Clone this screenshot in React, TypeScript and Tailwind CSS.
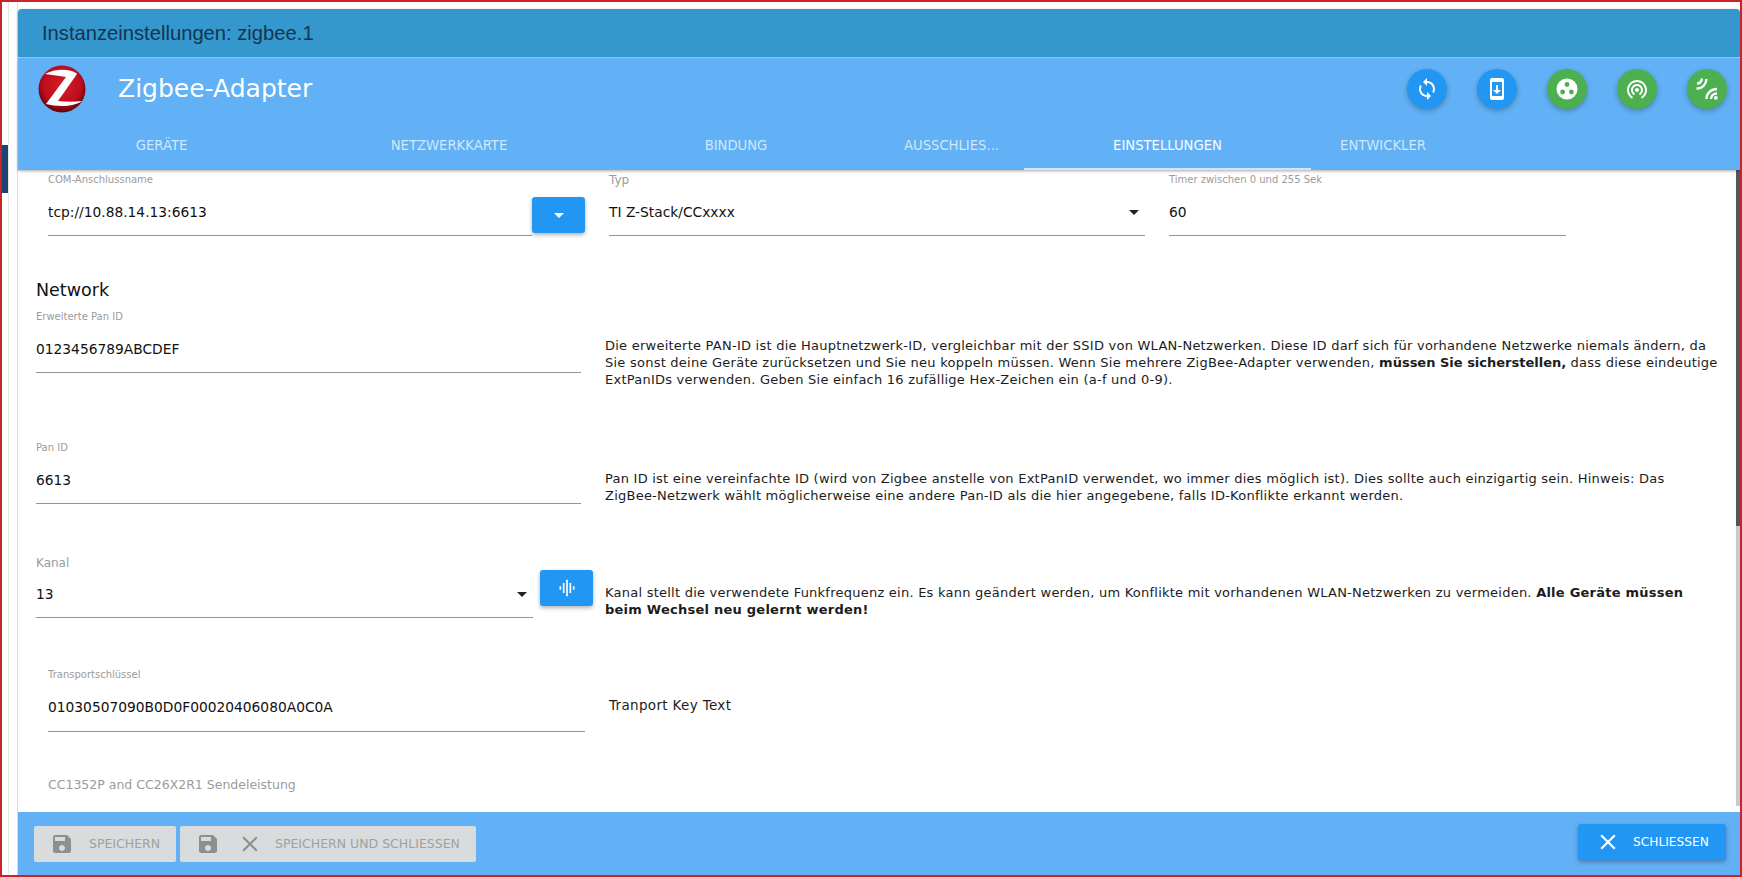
import React from "react";
import { MdSync, MdSystemUpdate, MdWifiTethering, MdArrowDropDown, MdGraphicEq, MdSave, MdClose } from "react-icons/md";

const tabs: [string, string, boolean][] = [
  ["GERÄTE", "w-[287px]", false],
  ["NETZWERKKARTE", "w-[288px]", false],
  ["BINDUNG", "w-[286px]", false],
  ["AUSSCHLIES...", "w-[145px]", false],
  ["EINSTELLUNGEN", "w-[287px]", true],
  ["ENTWICKLER", "w-[144px]", false],
];

function ZigbeeLogo() {
  return (
    <svg width="48" height="48" viewBox="0 0 48 48">
      <defs>
        <radialGradient id="zred" cx="50%" cy="42%" r="58%">
          <stop offset="0%" stopColor="#d81c28" />
          <stop offset="70%" stopColor="#bd0d1c" />
          <stop offset="100%" stopColor="#5c0508" />
        </radialGradient>
      </defs>
      <circle cx="24" cy="24" r="23.5" fill="url(#zred)" />
      <path d="M7 9 C16 4 30 3 38 8 L39 9 L20 36 C28 37 36 37 44 36 C36 42 20 42 8 39 L28 12 C22 11 14 10 7 9 Z" fill="#fff" />
    </svg>
  );
}

function DotsIcon() {
  return (
    <svg width="24" height="24" viewBox="0 0 24 24">
      <circle cx="12" cy="12" r="10.5" fill="#fff" />
      <circle cx="12" cy="7.5" r="2.4" fill="#4caf50" />
      <circle cx="7.6" cy="15" r="2.4" fill="#4caf50" />
      <circle cx="16.4" cy="15" r="2.4" fill="#4caf50" />
    </svg>
  );
}

function SignalIcon() {
  return (
    <svg width="24" height="24" viewBox="0 0 24 24" fill="none" stroke="#fff" strokeWidth="2.4">
      <path d="M2 6.5 C4.5 6.5 6.5 5 7 1.5" />
      <path d="M1.5 11.5 C7 12 11 8 11.5 2" />
      <path d="M11.5 22 C11.5 16.5 16 12 22 12" />
      <path d="M16 22 C16 19 18.5 16.5 22 16.5" />
      <circle cx="20.8" cy="20.8" r="1.9" fill="#fff" stroke="none" />
    </svg>
  );
}

function RoundButton({ green, children }: { green?: boolean; children: React.ReactNode }) {
  return (
    <div className={`flex h-10 w-10 items-center justify-center rounded-full text-white shadow-[0_2px_5px_rgba(0,0,0,0.25)] ${green ? "bg-[#4caf50]" : "bg-[#2196f3]"}`}>
      {children}
    </div>
  );
}

function Label({ children, h = "h-[14px]", size = "text-[10px]" }: { children: React.ReactNode; h?: string; size?: string }) {
  return <div className={`${h} ${size} flex items-center whitespace-nowrap leading-none text-[#9b9b9b]`}>{children}</div>;
}

function Input({ value, h = "h-[49px]", arrow = false, pad = "pt-[2px]" }: { value: string; h?: string; arrow?: boolean; pad?: string }) {
  return (
    <div className={`${h} ${pad} flex items-center justify-between border-b border-[#949494] text-[13.8px] text-[#111]`}>
      <span>{value}</span>
      {arrow && <MdArrowDropDown className="mr-[-1px] text-[#222]" size={24} />}
    </div>
  );
}

function BlueSquare({ children }: { children: React.ReactNode }) {
  return (
    <div className="flex h-[36px] w-[53px] items-center justify-center rounded-[3px] bg-[#2196f3] text-white shadow-[0_2px_4px_rgba(0,0,0,0.3)]">
      {children}
    </div>
  );
}

function Description({ children, mt, ml = "ml-[24px]", w = "w-[1112px]" }: { children: React.ReactNode; mt: string; ml?: string; w?: string }) {
  return <div className={`${mt} ${ml} ${w} text-[13px] leading-[17px] tracking-[0.24px] text-[#1c1c1c]`}>{children}</div>;
}

export default function App() {
  return (
    <div className="flex h-[877px] w-[1742px] overflow-hidden border-2 border-[#c8242c] bg-white font-['DejaVu_Sans',sans-serif]">
      <div className="flex w-[16px] shrink-0 border-r border-[#dcdcdc]">
        <div className="h-full w-[7px] border-r border-[#e6e6e6] pt-[143px]">
          <div className="h-[48px] w-full bg-[#1d4372]" />
        </div>
      </div>
      <div className="flex min-w-0 flex-1 flex-col pt-[7px]">
        <div className="flex h-[48px] shrink-0 items-center rounded-t-[4px] bg-[#3497ce] pl-[24px] font-['Liberation_Sans',sans-serif] text-[20.2px] text-[#14354f] shadow-[0_1px_3px_rgba(0,0,0,0.35)]">
          Instanzeinstellungen: zigbee.1
        </div>
        <div className="z-10 mt-px h-[112px] shrink-0 bg-[#62b0f5] shadow-[0_1px_3px_rgba(0,0,0,0.35)]">
          <div className="flex h-[62px] items-center pl-[20px] pr-[13px]">
            <ZigbeeLogo />
            <div className="ml-[32px] text-[25px] text-white">Zigbee-Adapter</div>
            <div className="ml-auto flex gap-[30px]">
              <RoundButton><MdSync size={24} /></RoundButton>
              <RoundButton><MdSystemUpdate size={24} /></RoundButton>
              <RoundButton green><DotsIcon /></RoundButton>
              <RoundButton green><MdWifiTethering size={24} /></RoundButton>
              <RoundButton green><SignalIcon /></RoundButton>
            </div>
          </div>
          <div className="mt-[5px] flex h-[45px]">
            {tabs.map(([t, w, active]) => (
              <div key={t} className={`${w} flex items-center justify-center text-[13.2px] ${active ? "border-b-2 border-[#cfe6f7] pb-[1px] font-medium text-[#f6fbff]" : "pb-[3px] text-[#cfe8fb]"}`}>
                {t}
              </div>
            ))}
          </div>
        </div>

        <div className="relative flex min-h-0 flex-1 flex-col overflow-hidden">
          <div className="absolute right-0 top-0 flex h-[636px] w-[4px] flex-col">
            <div className="h-[356px] bg-[#555555]" />
            <div className="flex-1 bg-[#cacaca]" />
          </div>

          <div className="flex h-[100px] shrink-0 pl-[30px] pt-[3px]">
            <div className="w-[484px]">
              <Label>COM-Anschlussname</Label>
              <Input value="tcp://10.88.14.13:6613" />
            </div>
            <div className="mt-[24px]"><BlueSquare><MdArrowDropDown size={24} /></BlueSquare></div>
            <div className="ml-[24px] w-[536px]">
              <Label size="text-[12px]">Typ</Label>
              <Input value="TI Z-Stack/CCxxxx" arrow />
            </div>
            <div className="ml-[24px] w-[397px]">
              <Label>Timer zwischen 0 und 255 Sek</Label>
              <Input value="60" />
            </div>
          </div>

          <div className="flex h-[40px] shrink-0 items-center pl-[18px] pt-[1px] text-[17.5px] text-[#111]">Network</div>

          <div className="flex h-[131px] shrink-0 pl-[18px]">
            <div className="w-[545px]">
              <Label>Erweiterte Pan ID</Label>
              <Input value="0123456789ABCDEF" />
            </div>
            <Description mt="mt-[27px]" w="w-[1116px]">
              Die erweiterte PAN-ID ist die Hauptnetzwerk-ID, vergleichbar mit der SSID von WLAN-Netzwerken. Diese ID darf sich für vorhandene Netzwerke niemals ändern, da Sie sonst deine Geräte zurücksetzen und Sie neu koppeln müssen. Wenn Sie mehrere ZigBee-Adapter verwenden, <b className="tracking-normal">müssen Sie sicherstellen,</b> dass diese eindeutige ExtPanIDs verwenden. Geben Sie einfach 16 zufällige Hex-Zeichen ein (a-f und 0-9).
            </Description>
          </div>

          <div className="flex h-[114px] shrink-0 pl-[18px]">
            <div className="w-[545px]">
              <Label>Pan ID</Label>
              <Input value="6613" />
            </div>
            <Description mt="mt-[29px]">
              Pan ID ist eine vereinfachte ID (wird von Zigbee anstelle von ExtPanID verwendet, wo immer dies möglich ist). Dies sollte auch einzigartig sein. Hinweis: Das ZigBee-Netzwerk wählt möglicherweise eine andere Pan-ID als die hier angegebene, falls ID-Konflikte erkannt werden.
            </Description>
          </div>

          <div className="flex h-[113px] shrink-0 pl-[18px]">
            <div className="w-[497px]">
              <Label h="h-[16px]" size="text-[12px]">Kanal</Label>
              <Input value="13" h="h-[47px]" pad="pt-0" arrow />
            </div>
            <div className="ml-[7px] mt-[15px]"><BlueSquare><MdGraphicEq size={20} /></BlueSquare></div>
            <Description mt="mt-[29px]" ml="ml-[12px]">
              Kanal stellt die verwendete Funkfrequenz ein. Es kann geändert werden, um Konflikte mit vorhandenen WLAN-Netzwerken zu vermeiden. <b>Alle Geräte müssen beim Wechsel neu gelernt werden!</b>
            </Description>
          </div>

          <div className="flex h-[110px] shrink-0 pl-[30px]">
            <div className="w-[537px]">
              <Label>Transportschlüssel</Label>
              <Input value="01030507090B0D0F00020406080A0C0A" h="h-[50px]" pad="pt-[1px]" />
            </div>
            <div className="ml-[24px] mt-[29px] text-[13.5px] leading-[17px] tracking-[0.33px] text-[#1c1c1c]">Tranport Key Text</div>
          </div>

          <div className="shrink-0 pl-[30px]">
            <Label size="text-[12.5px]">CC1352P and CC26X2R1 Sendeleistung</Label>
          </div>
        </div>

        <div className="flex h-[63px] shrink-0 items-start bg-[#62b0f5] pl-[16px] pr-[14px] text-[12.5px]">
          <div className="mt-[14px] flex h-[36px] w-[142px] items-center gap-[15px] rounded-[2px] bg-[#d9dcdd] pl-[16px] text-[#a0a0a0]">
            <MdSave className="shrink-0 text-[#8f8f8f]" size={24} />
            <span>SPEICHERN</span>
          </div>
          <div className="ml-[4px] mt-[14px] flex h-[36px] w-[296px] items-center rounded-[2px] bg-[#d9dcdd] pl-[16px] text-[#a0a0a0]">
            <MdSave className="shrink-0 text-[#8f8f8f]" size={24} />
            <MdClose className="ml-[17px] shrink-0 text-[#8f8f8f]" size={26} />
            <span className="ml-[12px]">SPEICHERN UND SCHLIESSEN</span>
          </div>
          <div className="ml-auto mt-[12px] flex h-[36px] w-[148px] items-center rounded-[3px] bg-[#2196f3] pl-[17px] text-[12.2px] text-white shadow-[0_2px_4px_rgba(0,0,0,0.3)]">
            <MdClose className="shrink-0" size={26} />
            <span className="ml-[12px]">SCHLIESSEN</span>
          </div>
        </div>
      </div>
    </div>
  );
}
